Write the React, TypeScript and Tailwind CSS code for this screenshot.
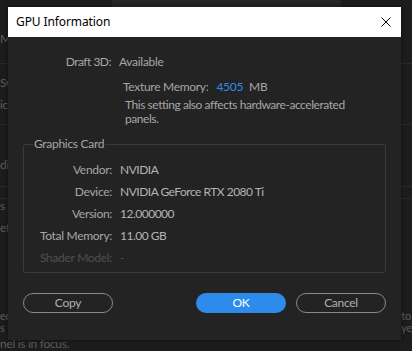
import React from "react"

const font = { fontFamily: '"Lato", "Noto Sans", sans-serif' }

const Row: React.FC<{ label: string; value: string; dim?: boolean }> = ({ label, value, dim }) => (
    <div className={`flex h-[22px] items-center ${dim ? "text-[#4f4f4f]" : "text-[#a6a6a6]"}`}>
        <span className="w-[88px] shrink-0 text-right">{label}</span>
        <span className={`ml-[8px] tracking-[-0.5px] ${dim ? "" : "text-[#b4b4b4]"}`}>{value}</span>
    </div>
)

export default function App() {
    return (
        <div
            className="relative h-[351px] w-[412px] overflow-hidden bg-[#1d1d1d] text-[12px] tracking-[-0.3px] text-[#5e5e5e]"
            style={font}
        >
            {/* backdrop: the panel behind the dialog */}
            <div className="flex flex-col leading-[14px]">
                <div className="h-[32px]">
                    <div className="ml-[112px] h-[8px] w-[229px] bg-[#262626]" />
                </div>
                <div className="h-[14px]">M</div>
                <div className="h-[18px] border-b border-[#2a2a2a]" />
                <div className="h-[12px]" />
                <div className="h-[14px]">Sw</div>
                <div className="h-[8px]" />
                <div className="h-[14px]">ic</div>
                <div className="h-[13px] border-b border-[#2a2a2a]" />
                <div className="h-[33px]" />
                <div className="h-[14px]">di</div>
                <div className="h-[15px] border-b border-[#2a2a2a]" />
                <div className="h-[12px] border-b border-[#2a2a2a]" />
                <div className="h-[14px]">s</div>
                <div className="h-[8px]" />
                <div className="h-[14px]">ef</div>
                <div className="h-[75px]" />
                <div className="flex justify-between text-[11px] leading-[12px]">
                    <span>
                        ed
                        <br />s
                    </span>
                    <span>
                        to
                        <br />
                        ye
                    </span>
                </div>
                <div className="mt-[2px] leading-[16px]">nel is in focus.</div>
            </div>

            {/* dialog */}
            <div className="absolute left-[8px] top-[7px] flex h-[333px] w-[393px] flex-col bg-[#232323] shadow-[0_0_6px_rgba(0,0,0,0.5)]">
                <div className="flex h-[30px] items-center justify-between bg-white pl-[8px] pr-[10px]">
                    <span
                        className="text-[12px] tracking-[-0.1px] text-black"
                        style={{ fontFamily: '"Noto Sans", sans-serif' }}
                    >
                        GPU Information
                    </span>
                    <svg width="10" height="10" viewBox="0 0 10 10" stroke="#000" strokeWidth="1" fill="none">
                        <path d="M0.5 0.5L9.5 9.5M9.5 0.5L0.5 9.5" />
                    </svg>
                </div>

                <div className="flex flex-1 flex-col px-[15px]">
                    <div className="mt-[16px] flex h-[18px] items-center text-[#a6a6a6]">
                        <span className="w-[88px] shrink-0 text-right tracking-[-0.5px]">Draft 3D:</span>
                        <span className="ml-[8px]">Available</span>
                    </div>
                    <div className="ml-[100px] mt-[7px] flex h-[18px] items-center text-[#a6a6a6]">
                        <span className="tracking-[-0.3px]">Texture Memory:</span>
                        <span className="ml-[8px] text-[#2d8ceb]">4505</span>
                        <span className="ml-[6px]">MB</span>
                    </div>
                    <p className="ml-[102px] mt-[2px] leading-[14px] tracking-[-0.45px] text-[#a6a6a6]">
                        This setting also affects hardware-accelerated
                        <br />
                        panels.
                    </p>

                    <fieldset className="mt-[9px] h-[138px] rounded-[2px] border border-[#3a3a3a]">
                        <legend className="ml-[9px] px-[1px] text-[#a6a6a6]">Graphics Card</legend>
                        <div className="mt-[6px] flex flex-col">
                            <Row label="Vendor:" value="NVIDIA" />
                            <Row label="Device:" value="NVIDIA GeForce RTX 2080 Ti" />
                            <Row label="Version:" value="12.000000" />
                            <Row label="Total Memory:" value="11.00 GB" />
                            <Row label="Shader Model:" value="-" dim />
                        </div>
                    </fieldset>

                    <div className="mt-[20px] flex items-center">
                        <button className="h-[20px] w-[90px] rounded-full border-[1.5px] border-[#8a8a8a] text-[#b0b0b0]">
                            Copy
                        </button>
                        <button className="ml-auto h-[20px] w-[90px] rounded-full bg-[#2d8ceb] text-white">OK</button>
                        <button className="ml-[10px] h-[20px] w-[90px] rounded-full border-[1.5px] border-[#8a8a8a] text-[#b0b0b0]">
                            Cancel
                        </button>
                    </div>
                </div>
            </div>
        </div>
    )
}
